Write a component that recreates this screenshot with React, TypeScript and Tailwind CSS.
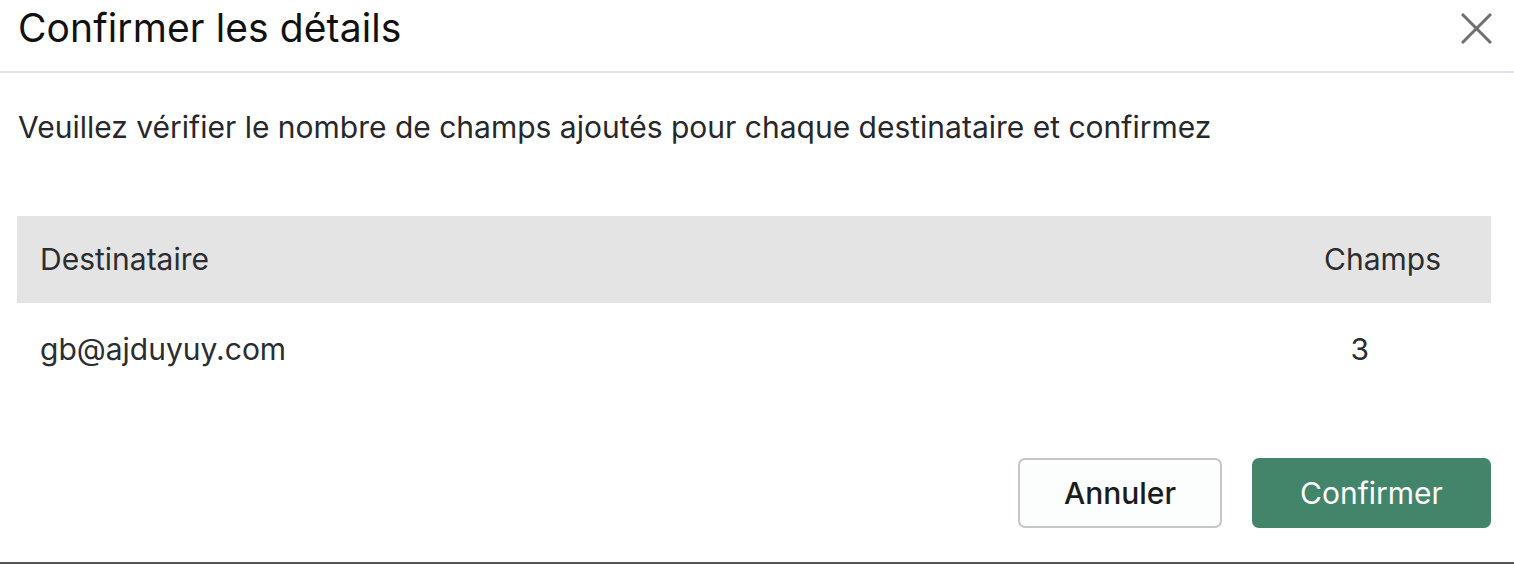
export default function App() {
  return (
    <div
      className="w-[1514px] h-[564px] bg-white flex flex-col overflow-hidden"
      style={{ fontFamily: "Inter, 'Noto Sans', sans-serif" }}
    >
      <div className="h-[73px] flex items-start justify-between pl-[18px] pr-[22px] border-b-2 border-[#e0e4e8] shrink-0">
        <h1 className="mt-[8px] text-[39px] text-[#111] tracking-[0.1px] leading-none">Confirmer les détails</h1>
        <button className="mt-[13px] w-[31px] h-[31px] flex items-center justify-center" aria-label="Fermer">
          <svg width="31" height="31" viewBox="0 0 31 31" fill="none">
            <path d="M1 1L30 30M30 1L1 30" stroke="#6f6f6f" strokeWidth="3" />
          </svg>
        </button>
      </div>

      <div className="flex-1 flex flex-col px-[17px]">
        <p className="mt-[36px] pl-[1px] text-[30px] text-[#26282c] leading-[36px]">
          Veuillez vérifier le nombre de champs ajoutés pour chaque destinataire et confirmez
        </p>

        <div className="mt-[71px] w-[1474px]">
          <div className="h-[87px] bg-[#e4e4e4] flex items-center justify-between pl-[23px] pr-[50px] text-[30px] text-[#2b2d30]">
            <span>Destinataire</span>
            <span>Champs</span>
          </div>
          <div className="h-[92px] flex items-center justify-between pl-[23px] pr-[122px] text-[30px] text-[#2b2d30]">
            <span>gb@ajduyuy.com</span>
            <span>3</span>
          </div>
        </div>

        <div className="mt-[63px] w-[1474px] flex justify-end gap-[30px]">
          <button className="w-[204px] h-[70px] rounded-[7px] border-2 border-[#c6c6c6] bg-[#fcfdfd] text-[30px] font-medium text-[#1c1c1c]">
            Annuler
          </button>
          <button className="w-[239px] h-[70px] rounded-[7px] bg-[#43856b] text-[30px] text-white">
            Confirmer
          </button>
        </div>
      </div>

      <div className="h-[2px] bg-[#555] shrink-0" />
    </div>
  );
}
